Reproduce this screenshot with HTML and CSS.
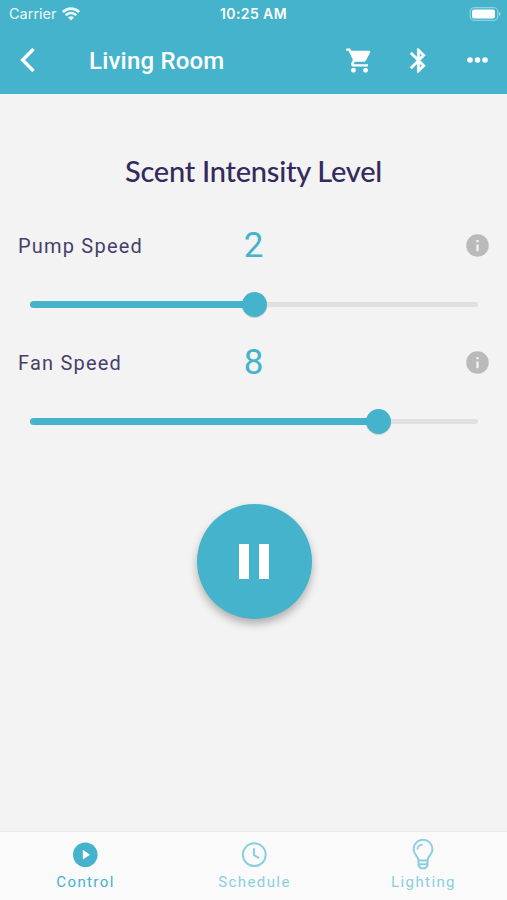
FILE: index.html
```html
<!DOCTYPE html>
<html lang="en">
<head>
    <meta charset="UTF-8">
    <meta name="viewport" content="width=device-width, initial-scale=1.0">
    <title>Living Room</title>
    <link rel="stylesheet" href="styles.css">
</head>
<body>

<header class="header">
    <div class="status-bar">
        <div class="carrier">
            <span>Carrier</span>
            <svg class="wifi" width="18" height="14" viewBox="0 0 18 14">
                <path d="M.8 5a11.600 11.600 0 0 1 16.400 0M3.700 8.200a7.500 7.500 0 0 1 10.600 0" fill="none" stroke="#fff" stroke-width="2.700"/>
                <path d="M9 13.500l-3-3a4.200 4.200 0 0 1 6 0z" fill="#fff"/>
            </svg>
        </div>
        <div class="time">10:25 AM</div>
        <svg class="battery" width="32" height="14" viewBox="0 0 32 14">
            <rect x="1.200" y=".7" width="27.600" height="12.600" rx="4" fill="none" stroke="#fff" stroke-opacity=".4" stroke-width="1.200"/>
            <rect x="3" y="2.500" width="23" height="9" rx="2.200" fill="#fff"/>
            <path d="M30 4.800a2.400 2.400 0 0 1 0 4.400z" fill="#fff" fill-opacity=".5"/>
        </svg>
    </div>
    <div class="nav-bar">
        <svg class="back" width="16" height="26" viewBox="0 0 16 26">
            <path d="M13.500 2L2.600 13l10.900 11" fill="none" stroke="#fff" stroke-width="3.400"/>
        </svg>
        <h1>Living Room</h1>
        <div class="actions">
            <svg width="29" height="29" viewBox="0 0 24 24" fill="#fff">
                <path d="M7 18c-1.100 0-1.990.9-1.990 2S5.900 22 7 22s2-.9 2-2-.9-2-2-2zM1 2v2h2l3.600 7.590-1.350 2.450c-.16.28-.25.61-.25.96 0 1.100.9 2 2 2h12v-2H7.420c-.14 0-.25-.11-.25-.25l.03-.12.9-1.630h7.450c.75 0 1.410-.41 1.750-1.030l3.580-6.490A1 1 0 0 0 20 4H5.210l-.94-2H1zm16 16c-1.100 0-1.990.9-1.990 2s.89 2 1.990 2 2-.9 2-2-.9-2-2-2z"/>
            </svg>
            <svg width="29" height="29" viewBox="0 0 24 24" fill="#fff" stroke="#fff" stroke-width=".4">
                <path d="M17.710 7.710L12 2h-1v7.590L6.410 5 5 6.410 10.590 12 5 17.590 6.410 19 11 14.410V22h1l5.710-5.710-4.300-4.290 4.300-4.290zM13 5.830l1.880 1.880L13 9.590V5.830zm1.880 10.460L13 18.170v-3.760l1.880 1.880z"/>
            </svg>
            <svg width="29" height="29" viewBox="0 0 29 29" fill="#fff">
                <circle cx="7" cy="14" r="2.800"/>
                <circle cx="14.500" cy="14" r="2.800"/>
                <circle cx="22" cy="14" r="2.800"/>
            </svg>
        </div>
    </div>
</header>

<main class="content">
    <h2>Scent Intensity Level</h2>

    <section class="control">
        <div class="control-row">
            <span class="label">Pump Speed</span>
            <span class="value">2</span>
            <svg class="info" width="27" height="27" viewBox="0 0 24 24">
                <path d="M12 2a10 10 0 1 0 0 20 10 10 0 0 0 0-20zm1 15h-2v-6h2zm0-8h-2V7h2z"/>
            </svg>
        </div>
        <div class="slider">
            <div class="fill" style="width: 50%"></div>
            <div class="thumb" style="left: 50%"></div>
        </div>
    </section>

    <section class="control">
        <div class="control-row">
            <span class="label">Fan Speed</span>
            <span class="value">8</span>
            <svg class="info" width="27" height="27" viewBox="0 0 24 24">
                <path d="M12 2a10 10 0 1 0 0 20 10 10 0 0 0 0-20zm1 15h-2v-6h2zm0-8h-2V7h2z"/>
            </svg>
        </div>
        <div class="slider">
            <div class="fill" style="width: 77.8%"></div>
            <div class="thumb" style="left: 77.8%"></div>
        </div>
    </section>

    <button class="pause-button" type="button" aria-label="Pause">
        <span></span>
        <span></span>
    </button>
</main>

<nav class="tab-bar">
    <div class="tab active">
        <svg width="30" height="32" viewBox="0 0 30 32">
            <circle cx="15.300" cy="15.700" r="12.300" fill="#44b3cb"/>
            <path d="M12.800 10.800v9.800l7.200-4.900z" fill="#fff"/>
        </svg>
        <span>Control</span>
    </div>
    <div class="tab">
        <svg width="30" height="32" viewBox="0 0 30 32" fill="none" stroke="#8acfdf" stroke-width="2">
            <circle cx="15.300" cy="15.700" r="11.400"/>
            <path d="M15 9.300v6.700l5.200 3.200"/>
        </svg>
        <span>Schedule</span>
    </div>
    <div class="tab">
        <svg width="30" height="32" viewBox="0 0 30 32" fill="none" stroke="#8acfdf" stroke-width="2">
            <path d="M10.500 21.500c0-4.500-5-6-5-11.200a9.500 9.500 0 0 1 19 0c0 5.200-5 6.700-5 11.200z"/>
            <path d="M10.500 21.500v5l2 2.700h5l2-2.700v-5M10.500 25.300h9"/>
            <path d="M9.400 10.800c0-3 2-5 5-5.200" stroke-width="1.600"/>
        </svg>
        <span>Lighting</span>
    </div>
</nav>

</body>
</html>
```

FILE: styles.css
```css
* {
    box-sizing: border-box;
}
body {
    margin: 0;
    height: 900px;
    display: flex;
    flex-direction: column;
    font-family: Roboto, sans-serif;
    background-color: #f3f3f3;
    overflow: hidden;
}
.header {
    height: 94px;
    background-color: #44b3cb;
    color: #fff;
}
.status-bar {
    display: grid;
    grid-template-columns: 1fr auto 1fr;
    align-items: center;
    height: 27px;
    padding: 0 6px 0 9px;
    font-family: Inter, sans-serif;
    font-size: 14.5px;
}
.carrier {
    display: flex;
    align-items: center;
    gap: 5px;
    opacity: 0.9;
}
.time {
    margin-left: -3px;
    font-weight: 600;
    font-size: 14px;
    letter-spacing: 0.4px;
}
.battery {
    justify-self: end;
}
.nav-bar {
    display: flex;
    align-items: center;
    height: 66px;
    padding: 0 15px 0 20px;
}
.nav-bar h1 {
    margin: 1px 0 0 53px;
    font-size: 24px;
    font-weight: 500;
    line-height: 28px;
    letter-spacing: 0.2px;
}
.actions {
    display: flex;
    gap: 30px;
    margin-left: auto;
}
.content {
    flex: 1;
    display: flex;
    flex-direction: column;
    align-items: center;
    padding: 57px 18px 0;
}
.content h2 {
    margin: 0 0 29px;
    font-family: Lato, sans-serif;
    font-size: 29px;
    font-weight: 500;
    line-height: 40px;
    letter-spacing: -0.25px;
    white-space: nowrap;
    color: #342b5c;
}
.control {
    width: 100%;
    height: 117px;
}
.control-row {
    display: grid;
    grid-template-columns: 1fr auto 1fr;
    align-items: center;
    height: 50px;
}
.label {
    padding-top: 1px;
    font-size: 20px;
    letter-spacing: 1.2px;
    color: #483e6b;
}
.value {
    padding-top: 1px;
    font-size: 35px;
    color: #44b3cb;
}
.info {
    justify-self: end;
    margin-right: -2px;
    fill: #bababa;
}
.slider {
    position: relative;
    height: 5px;
    margin: 32px 11px 0 12px;
    border-radius: 3px;
    background-color: #e0e0e0;
}
.fill {
    position: relative;
    top: -1px;
    height: 7px;
    border-radius: 4px;
    background-color: #44b3cb;
}
.thumb {
    position: absolute;
    top: -10px;
    width: 25px;
    height: 25px;
    margin-left: -12.5px;
    border-radius: 50%;
    background-color: #44b3cb;
    box-shadow: 0 1px 1px rgba(0, 0, 0, 0.15);
}
.pause-button {
    display: flex;
    align-items: center;
    justify-content: center;
    gap: 10px;
    width: 115px;
    height: 115px;
    margin: 50px 0 0 1px;
    padding: 0;
    border: none;
    border-radius: 50%;
    background-color: #44b3cb;
    box-shadow: 0 5px 9px rgba(0, 0, 0, 0.28);
    cursor: pointer;
}
.pause-button span {
    width: 10px;
    height: 35px;
    background-color: #fff;
}
.tab-bar {
    display: flex;
    height: 69px;
    border-top: 1px solid #ededed;
    background-color: #fafafa;
}
.tab {
    flex: 1;
    display: flex;
    flex-direction: column;
    align-items: center;
    padding-top: 7px;
    font-size: 15px;
    line-height: 20px;
    letter-spacing: 1.4px;
    color: #8acfdf;
}
.tab span {
    margin: 1px 0 0 2px;
}
.tab.active {
    color: #44b3cb;
}
```
